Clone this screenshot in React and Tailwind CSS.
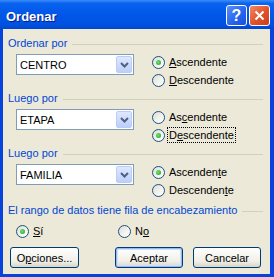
import React from 'react';

// Ordenar dialog, Windows XP look
const font = "font-['Liberation_Sans',Arial,sans-serif]";

function Radio({ checked, children, focus }) {
    return (
        <div className="h-[14px] flex items-center gap-[4px]">
            <span className="relative w-[13px] h-[13px] rounded-full border border-[#1c5180] bg-[linear-gradient(135deg,#dcdcd7_0%,#f4f4f0_60%,#ffffff_100%)] shrink-0">
                {checked && (
                    <span className="absolute left-[3px] top-[3px] w-[5px] h-[5px] rounded-full bg-[radial-gradient(circle_at_40%_40%,#6fe06f,#21a121)]" />
                )}
            </span>
            <span className={`text-black leading-[14px] ${focus ? 'outline outline-1 outline-dotted outline-black px-[1px] -ml-[1px]' : ''}`}>
                {children}
            </span>
        </div>
    );
}

function GroupLabel({ text }) {
    return (
        <div className="h-[14px] flex items-center gap-[5px]">
            <span className="text-[#0046d5] leading-[14px] whitespace-nowrap">{text}</span>
            <span className="flex-1 h-px bg-[#d0d0bf] mr-[2px] mt-[2px]" />
        </div>
    );
}

function Combo({ value }) {
    return (
        <div className="ml-[8px] w-[118px] h-[21px] bg-white border border-[#7f9db9] flex items-center pl-[3px] pr-[1px]">
            <span className="flex-1 text-black leading-[14px]">{value}</span>
            <span className="w-[16px] h-[17px] rounded-[2px] border border-[#b9cdf8] bg-[linear-gradient(#dfe8fd,#bccffa)] flex items-center justify-center">
                <svg width="9" height="6" viewBox="0 0 9 6">
                    <path d="M1 1 L4.5 4.5 L8 1" fill="none" stroke="#4d6185" strokeWidth="2" />
                </svg>
            </span>
        </div>
    );
}

function Section({ label, value, asc, desc, ascChecked, focusDesc }) {
    return (
        <div className="h-[55px] flex flex-col">
            <GroupLabel text={label} />
            <div className="flex mt-[4px]">
                <Combo value={value} />
                <div className="ml-[18px] mt-[1px] flex flex-col gap-[4px]">
                    <Radio checked={ascChecked}>{asc}</Radio>
                    <Radio checked={!ascChecked} focus={focusDesc}>{desc}</Radio>
                </div>
            </div>
        </div>
    );
}

function XPButton({ children, isDefault, className = '' }) {
    return (
        <button
            className={`h-[21px] rounded-[3px] border border-[#003c74] bg-[linear-gradient(#ffffff,#f0efe7_70%,#d8d4c6)] text-black leading-[14px] flex items-center justify-center ${
                isDefault ? 'shadow-[inset_0_0_0_1px_#98b8f4,inset_0_0_0_2px_#cee0fb]' : ''
            } ${className}`}
        >
            {children}
        </button>
    );
}

export default function App() {
    return (
        <div className={`w-[274px] h-[277px] bg-[#0843dd] flex flex-col text-[11px] ${font}`}>
            {/* Barra de título */}
            <div className="h-[29px] flex items-start pl-[6px] pr-[4px] pt-[5px] bg-[linear-gradient(#3a8cf8_0%,#0a62f0_12%,#0057e8_50%,#0052e0_85%,#0046d2_100%)]">
                <span className="flex-1 h-[21px] leading-[21px] pt-[1px] text-white text-[13px] font-bold [text-shadow:1px_1px_#0a1a8a]">
                    Ordenar
                </span>
                <span className="w-[21px] h-[21px] rounded-[3px] border border-white bg-[linear-gradient(135deg,#5a8ff8,#2563ec_60%,#1b4fd8)] flex items-center justify-center text-white font-bold text-[16px] leading-none">
                    ?
                </span>
                <span className="ml-[2px] w-[21px] h-[21px] rounded-[3px] border border-white bg-[linear-gradient(135deg,#f08a66,#e0512a_55%,#c8401c)] flex items-center justify-center">
                    <svg width="11" height="11" viewBox="0 0 11 11">
                        <path d="M1.5 1.5 L9.5 9.5 M9.5 1.5 L1.5 9.5" stroke="white" strokeWidth="2" />
                    </svg>
                </span>
            </div>

            {/* Cuerpo */}
            <div className="flex-1 ml-[3px] mr-[4px] mb-[3px] bg-[#ece9d8] flex flex-col px-[5px] pt-[7px]">
                <Section
                    label="Ordenar por"
                    value="CENTRO"
                    ascChecked
                    asc={<><u>A</u>scendente</>}
                    desc={<><u>D</u>escendente</>}
                />
                <Section
                    label="Luego por"
                    value="ETAPA"
                    ascChecked={false}
                    focusDesc
                    asc={<>As<u>c</u>endente</>}
                    desc={<>D<u>e</u>scendente</>}
                />
                <Section
                    label="Luego por"
                    value="FAMILIA"
                    ascChecked
                    asc={<>Ascenden<u>t</u>e</>}
                    desc={<>Descenden<u>t</u>e</>}
                />

                <div className="mt-[2px]">
                    <GroupLabel text="El rango de datos tiene fila de encabezamiento" />
                </div>
                <div className="flex mt-[7px] ml-[8px]">
                    <div className="w-[102px]">
                        <Radio checked><u>S</u>í</Radio>
                    </div>
                    <Radio>N<u>o</u></Radio>
                </div>

                <div className="flex mt-[9px] ml-[2px] mr-[4px]">
                    <XPButton className="w-[69px]">O<u>p</u>ciones...</XPButton>
                    <XPButton isDefault className="w-[68px] ml-auto">Aceptar</XPButton>
                    <XPButton className="w-[68px] ml-[10px]">Cancelar</XPButton>
                </div>
            </div>
        </div>
    );
}
